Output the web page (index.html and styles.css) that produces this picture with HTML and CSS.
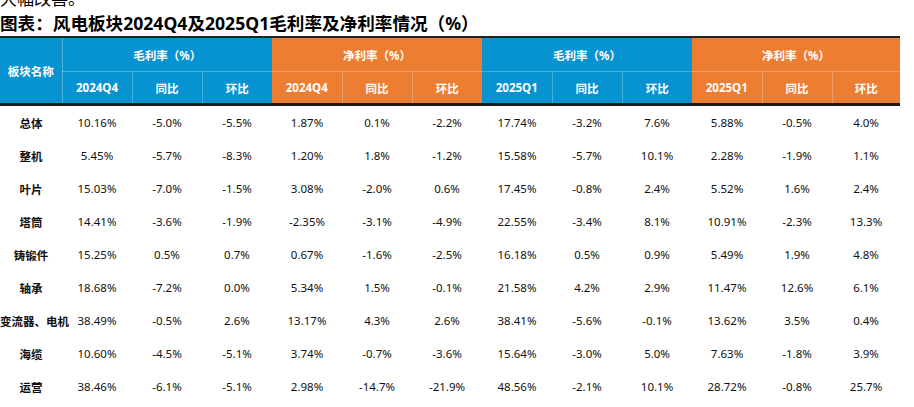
FILE: index.html
```html
<!DOCTYPE html>
<html lang="zh">
<head>
<meta charset="utf-8">
<link rel="stylesheet" href="styles.css">
</head>
<body>
<div class="page">
  <p class="lead">大幅改善。</p>
  <h1 class="title">图表：风电板块2024Q4及2025Q1毛利率及净利率情况（%）</h1>
  <table class="tbl">
    <colgroup>
      <col class="c-name">
      <col class="c-d"><col class="c-d"><col class="c-d">
      <col class="c-d"><col class="c-d"><col class="c-d">
      <col class="c-d"><col class="c-d"><col class="c-d">
      <col class="c-d"><col class="c-d"><col class="c-d4">
    </colgroup>
    <thead>
      <tr class="h1">
        <th rowspan="2" class="blue name-h">板块名称</th>
        <th colspan="3" class="blue">毛利率（%）</th>
        <th colspan="3" class="orange">净利率（%）</th>
        <th colspan="3" class="blue">毛利率（%）</th>
        <th colspan="3" class="orange">净利率（%）</th>
      </tr>
      <tr class="h2">
        <th class="blue">2024Q4</th><th class="blue">同比</th><th class="blue">环比</th>
        <th class="orange">2024Q4</th><th class="orange">同比</th><th class="orange">环比</th>
        <th class="blue">2025Q1</th><th class="blue">同比</th><th class="blue">环比</th>
        <th class="orange">2025Q1</th><th class="orange">同比</th><th class="orange">环比</th>
      </tr>
    </thead>
    <tbody>
      <tr><th>总体</th><td>10.16%</td><td>-5.0%</td><td>-5.5%</td><td>1.87%</td><td>0.1%</td><td>-2.2%</td><td>17.74%</td><td>-3.2%</td><td>7.6%</td><td>5.88%</td><td>-0.5%</td><td>4.0%</td></tr>
      <tr><th>整机</th><td>5.45%</td><td>-5.7%</td><td>-8.3%</td><td>1.20%</td><td>1.8%</td><td>-1.2%</td><td>15.58%</td><td>-5.7%</td><td>10.1%</td><td>2.28%</td><td>-1.9%</td><td>1.1%</td></tr>
      <tr><th>叶片</th><td>15.03%</td><td>-7.0%</td><td>-1.5%</td><td>3.08%</td><td>-2.0%</td><td>0.6%</td><td>17.45%</td><td>-0.8%</td><td>2.4%</td><td>5.52%</td><td>1.6%</td><td>2.4%</td></tr>
      <tr><th>塔筒</th><td>14.41%</td><td>-3.6%</td><td>-1.9%</td><td>-2.35%</td><td>-3.1%</td><td>-4.9%</td><td>22.55%</td><td>-3.4%</td><td>8.1%</td><td>10.91%</td><td>-2.3%</td><td>13.3%</td></tr>
      <tr><th>铸锻件</th><td>15.25%</td><td>0.5%</td><td>0.7%</td><td>0.67%</td><td>-1.6%</td><td>-2.5%</td><td>16.18%</td><td>0.5%</td><td>0.9%</td><td>5.49%</td><td>1.9%</td><td>4.8%</td></tr>
      <tr><th>轴承</th><td>18.68%</td><td>-7.2%</td><td>0.0%</td><td>5.34%</td><td>1.5%</td><td>-0.1%</td><td>21.58%</td><td>4.2%</td><td>2.9%</td><td>11.47%</td><td>12.6%</td><td>6.1%</td></tr>
      <tr><th>变流器、电机</th><td>38.49%</td><td>-0.5%</td><td>2.6%</td><td>13.17%</td><td>4.3%</td><td>2.6%</td><td>38.41%</td><td>-5.6%</td><td>-0.1%</td><td>13.62%</td><td>3.5%</td><td>0.4%</td></tr>
      <tr><th>海缆</th><td>10.60%</td><td>-4.5%</td><td>-5.1%</td><td>3.74%</td><td>-0.7%</td><td>-3.6%</td><td>15.64%</td><td>-3.0%</td><td>5.0%</td><td>7.63%</td><td>-1.8%</td><td>3.9%</td></tr>
      <tr><th>运营</th><td>38.46%</td><td>-6.1%</td><td>-5.1%</td><td>2.98%</td><td>-14.7%</td><td>-21.9%</td><td>48.56%</td><td>-2.1%</td><td>10.1%</td><td>28.72%</td><td>-0.8%</td><td>25.7%</td></tr>
    </tbody>
  </table>
</div>
</body>
</html>
```

FILE: styles.css
```css
html, body {
  margin: 0;
  padding: 0;
  background: #fff;
}
.page {
  width: 914px;
  height: 407px;
  overflow: hidden;
  font-family: "Noto Sans", "Noto Sans CJK SC", sans-serif;
  color: #111;
}
.lead {
  margin: -12px 0 0 0;
  height: 22px;
  font-size: 17px;
  line-height: 20px;
  font-family: "Noto Sans CJK SC", sans-serif;
  color: #000;
}
.title {
  margin: 0;
  font-size: 17.6px;
  line-height: 26px;
  height: 26px;
  font-weight: 700;
  font-family: "Noto Sans", "Noto Sans CJK SC", sans-serif;
  color: #000;
  white-space: nowrap;
}
.tbl {
  border-collapse: collapse;
  table-layout: fixed;
  width: 900px;
  border-top: 2px solid #222;
}
.c-name { width: 62px; }
.c-d { width: 70px; }
.c-d4 { width: 68px; }
.tbl th, .tbl td {
  padding: 0;
  text-align: center;
  white-space: nowrap;
  overflow: visible;
}
thead th {
  color: #fff;
  font-size: 11.5px;
  font-weight: 700;
  font-family: "Noto Sans", "Noto Sans CJK SC", sans-serif;
}
.blue { background: #0793d2; }
.orange { background: #ed7d31; }
.h1 th { height: 33px; border-bottom: 1px solid rgba(255,255,255,0.25); }
.h2 th { height: 31px; border-bottom: 3px solid #1a1a1a; }
.h2 th + th { border-left: 1px solid rgba(255,255,255,0.25); }
.h1 th.name-h { border-right: 1px solid rgba(255,255,255,0.3); border-bottom: 3px solid #1a1a1a; }
.h2 th:nth-child(4), .h2 th:nth-child(7), .h2 th:nth-child(10) { border-left: none; }
tbody th {
  height: 33px;
  padding-bottom: 3px;
  font-size: 11.5px;
  font-weight: 700;
  color: #111;
}
tbody td {
  height: 33px;
  padding-bottom: 3px;
  font-size: 11.5px;
  color: #111;
}
```
